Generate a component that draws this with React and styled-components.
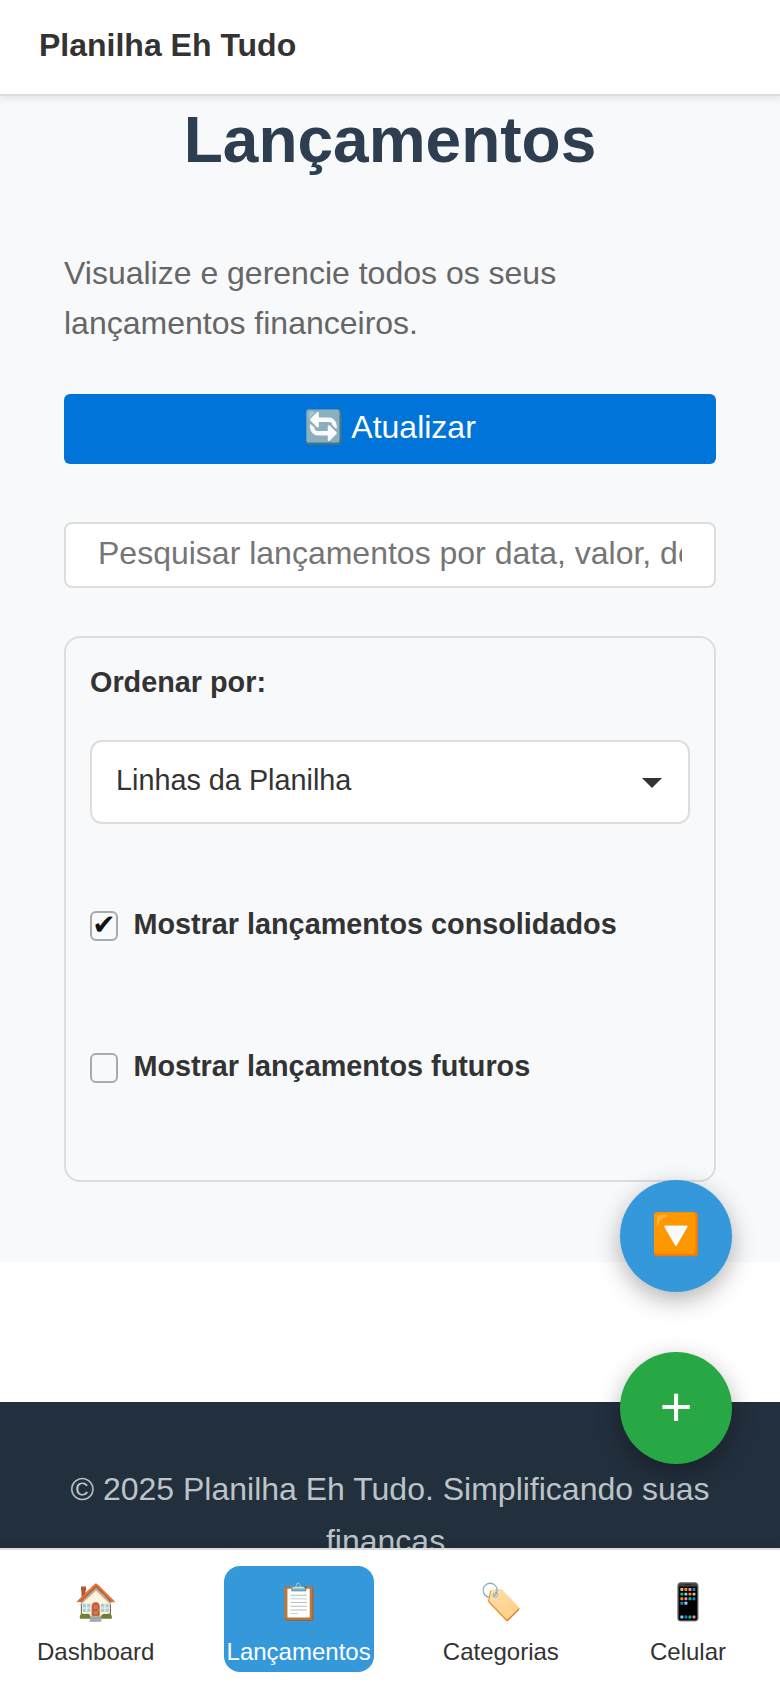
import React from "react";
import styled, { createGlobalStyle } from "styled-components";

const GlobalStyle = createGlobalStyle`
  * {
    box-sizing: border-box;
  }

  body {
    margin: 0;
    background: #fff;
    color: #333;
    font-family: "Liberation Sans", Arial, sans-serif;
  }

  button,
  input {
    font-family: inherit;
  }
`;

const Page = styled.div`
  position: relative;
  display: flex;
  flex-direction: column;
  height: 1688px;
  overflow: hidden;
`;

const Header = styled.header`
  z-index: 1;
  flex: none;
  height: 96px;
  padding: 26px 39px;
  background: #fff;
  border-bottom: 2px solid #ddd;
  box-shadow: 0 2px 8px rgba(0, 0, 0, 0.1);
`;

const Brand = styled.div`
  font-size: 32px;
  font-weight: bold;
  line-height: 38px;
`;

const Main = styled.main`
  flex: none;
  height: 1166px;
  padding: 8px 64px 0;
  background: #f8f9fb;
`;

const Title = styled.h1`
  margin: 0 0 66px;
  color: #2c3e50;
  font-size: 64px;
  line-height: 72px;
  text-align: center;
`;

const Intro = styled.p`
  margin: 0;
  padding-top: 6px;
  color: #666;
  font-size: 32px;
  line-height: 50px;
`;

const RefreshButton = styled.button`
  display: block;
  width: 100%;
  height: 70px;
  margin-top: 46px;
  padding: 0 0 4px;
  border: 0;
  border-radius: 6px;
  background: #0074d9;
  color: #fff;
  font-size: 32px;
`;

const SearchInput = styled.input`
  display: block;
  width: 100%;
  height: 66px;
  margin-top: 58px;
  padding: 0 32px 4px;
  border: 2px solid #ddd;
  border-radius: 8px;
  background: #fff;
  font-size: 32px;

  &::placeholder {
    color: #757575;
  }
`;

const Filters = styled.section`
  height: 546px;
  margin-top: 48px;
  padding: 27px 24px;
  border: 2px solid #ddd;
  border-radius: 16px;
`;

const FilterLabel = styled.div`
  font-size: 28.8px;
  font-weight: bold;
  line-height: 34px;
`;

const Select = styled.div`
  display: flex;
  align-items: center;
  justify-content: space-between;
  height: 84px;
  margin-top: 41px;
  padding: 0 26px 4px 24px;
  border: 2px solid #ddd;
  border-radius: 12px;
  background: #fff;
  font-size: 28.8px;
`;

const Caret = styled.span`
  margin-top: 6px;
  border: 10px solid transparent;
  border-top-color: #333;
  border-bottom: 0;
`;

const CheckRow = styled.label`
  display: flex;
  align-items: flex-start;
  gap: 15.4px;
  height: 34px;
  margin-top: ${({ $first }) => ($first ? "83px" : "108px")};
  font-size: 28.8px;
  font-weight: bold;
  line-height: 34px;
`;

const Checkbox = styled.span`
  display: flex;
  justify-content: center;
  width: 28px;
  height: 30px;
  margin-top: 4px;
  border: 2px solid #aaa;
  border-radius: 6px;
  color: #111;
  font-family: "DejaVu Sans", sans-serif;
  font-size: 28px;
  line-height: 23px;
`;

const Footer = styled.footer`
  flex: 1;
  margin-top: 140px;
  padding: 61px 64px 0;
  overflow: hidden;
  background: #222f3d;
  color: #bdc3c7;
  font-size: 32px;
  line-height: 52px;
  text-align: center;
`;

const BottomNav = styled.nav`
  z-index: 1;
  flex: none;
  display: flex;
  justify-content: space-between;
  height: 140px;
  padding: 16px 32px 16px 34px;
  background: #fff;
  border-top: 2px solid #ddd;
  box-shadow: 0 -2px 8px rgba(0, 0, 0, 0.1);
`;

const NavItem = styled.a`
  display: flex;
  flex-direction: column;
  align-items: center;
  min-width: 120px;
  height: 106px;
  padding: 12px 3px 0;
  border-radius: 16px;
  background: ${({ $active }) => ($active ? "#3498db" : "transparent")};
  color: ${({ $active }) => ($active ? "#fff" : "#333")};
`;

const NavIcon = styled.span`
  height: 48px;
  font-size: 35.2px;
  line-height: 48px;
`;

const NavLabel = styled.span`
  margin-top: 12px;
  font-size: 24px;
  line-height: 28px;
`;

const Fab = styled.button`
  position: absolute;
  z-index: 2;
  top: ${({ $top }) => $top}px;
  right: 48px;
  display: flex;
  align-items: center;
  justify-content: center;
  width: 112px;
  height: 112px;
  padding: 0 0 4px;
  border: 0;
  border-radius: 50%;
  background: ${({ $color }) => $color};
  box-shadow: 0 8px 24px rgba(0, 0, 0, 0.3);
  color: #fff;
  font-size: ${({ $size }) => $size}px;
`;

const navItems = [
  { icon: "🏠", label: "Dashboard" },
  { icon: "📋", label: "Lançamentos", active: true },
  { icon: "🏷️", label: "Categorias" },
  { icon: "📱", label: "Celular" },
];

const App = () => {
  return (
    <Page>
      <GlobalStyle />
      <Header>
        <Brand>Planilha Eh Tudo</Brand>
      </Header>

      <Main>
        <Title>Lançamentos</Title>
        <Intro>Visualize e gerencie todos os seus lançamentos financeiros.</Intro>
        <RefreshButton>🔄 Atualizar</RefreshButton>
        <SearchInput placeholder="Pesquisar lançamentos por data, valor, descrição" />

        <Filters>
          <FilterLabel>Ordenar por:</FilterLabel>
          <Select>
            Linhas da Planilha
            <Caret />
          </Select>
          <CheckRow $first>
            <Checkbox>✔</Checkbox>
            Mostrar lançamentos consolidados
          </CheckRow>
          <CheckRow>
            <Checkbox />
            Mostrar lançamentos futuros
          </CheckRow>
        </Filters>
      </Main>

      <Footer>© 2025 Planilha Eh Tudo. Simplificando suas finanças.</Footer>

      <BottomNav>
        {navItems.map(({ icon, label, active }) => (
          <NavItem key={label} $active={active}>
            <NavIcon>{icon}</NavIcon>
            <NavLabel>{label}</NavLabel>
          </NavItem>
        ))}
      </BottomNav>

      <Fab $top={1180} $color="#3498db" $size={40}>
        🔽
      </Fab>
      <Fab $top={1352} $color="#28a745" $size={56}>
        +
      </Fab>
    </Page>
  );
};

export default App;
